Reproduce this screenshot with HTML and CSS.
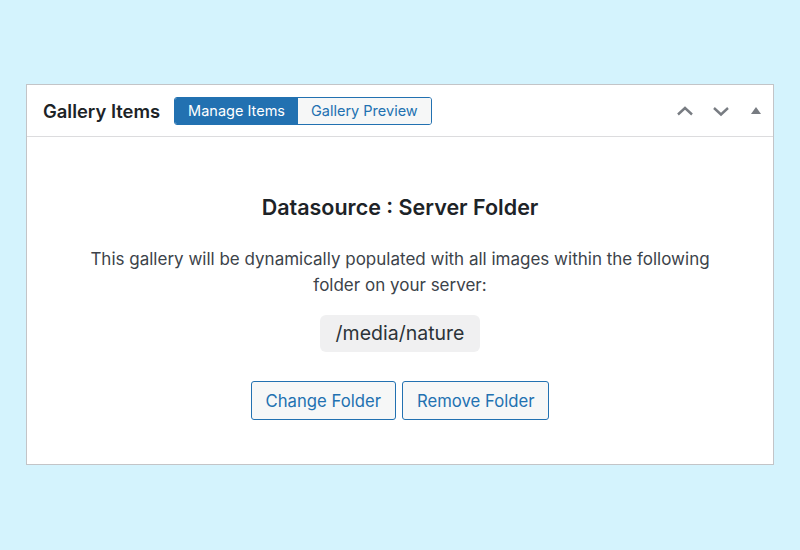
FILE: index.html
```html
<!DOCTYPE html>
<html lang="en">
<head>
  <meta charset="UTF-8">
  <title>Gallery Items</title>
  <link rel="stylesheet" href="styles.css">
</head>
<body>
  <div class="postbox">
    <div class="postbox-header">
      <h2 class="postbox-title">Gallery Items</h2>
      <div class="tab-group">
        <button class="tab active">Manage Items</button>
        <button class="tab">Gallery Preview</button>
      </div>
      <div class="handle-actions">
        <button class="handle-btn" aria-label="Move up">
          <svg width="20" height="20" viewBox="0 0 20 20"><path d="M3 13.5 L10 7 L17 13.5" fill="none" stroke="#787c82" stroke-width="2.4"/></svg>
        </button>
        <button class="handle-btn" aria-label="Move down">
          <svg width="20" height="20" viewBox="0 0 20 20"><path d="M3 7 L10 13.5 L17 7" fill="none" stroke="#787c82" stroke-width="2.4"/></svg>
        </button>
        <button class="handle-btn toggle" aria-label="Toggle panel">
          <svg width="12" height="10" viewBox="0 0 12 10"><path d="M6 1 L11 8 L1 8 Z" fill="#787c82"/></svg>
        </button>
      </div>
    </div>

    <div class="postbox-inside">
      <h3 class="datasource-title">Datasource : Server Folder</h3>
      <p class="datasource-desc">This gallery will be dynamically populated with all images within the following folder on your server:</p>
      <div class="folder-path">/media/nature</div>
      <div class="button-row">
        <button class="button">Change Folder</button>
        <button class="button">Remove Folder</button>
      </div>
    </div>
  </div>
</body>
</html>
```

FILE: styles.css
```css
body {
  margin: 0;
  padding: 84px 26px 0;
  background-color: #d4f3fd;
  font-family: Inter, 'Noto Sans', sans-serif;
  color: #1d2327;
}
.postbox {
  background-color: #fff;
  border: 1px solid #c3c4c7;
  height: 381px;
  box-sizing: border-box;
}
.postbox-header {
  display: flex;
  align-items: center;
  height: 52px;
  padding: 0 0 0 16px;
  border-bottom: 1px solid #dcdcde;
  box-sizing: border-box;
}
.postbox-title {
  font-size: 18.4px;
  font-weight: 600;
  margin: 0 14px 0 0;
  color: #1d2327;
}
.tab-group {
  display: flex;
  border: 1px solid #2271b1;
  border-radius: 3px;
  overflow: hidden;
}
.tab {
  font-family: inherit;
  font-size: 14.5px;
  height: 26px;
  padding: 0 13px;
  border: none;
  background-color: #f6f7f7;
  color: #2271b1;
  cursor: pointer;
}
.tab.active {
  background-color: #2271b1;
  color: #fff;
}
.handle-actions {
  margin-left: auto;
  display: flex;
  align-items: center;
}
.handle-btn {
  width: 36px;
  height: 36px;
  padding: 0;
  border: none;
  background: none;
  display: flex;
  align-items: center;
  justify-content: center;
  cursor: pointer;
}
.handle-btn.toggle {
  width: 34px;
}
.postbox-inside {
  text-align: center;
  padding: 57px 40px 0;
}
.datasource-title {
  font-size: 21.5px;
  font-weight: 600;
  margin: 0 0 26px;
  color: #1d2327;
}
.datasource-desc {
  font-size: 17px;
  line-height: 26px;
  color: #3c434a;
  max-width: 640px;
  margin: 0 auto 17px;
}
.folder-path {
  display: inline-block;
  background-color: #f0f0f1;
  border-radius: 6px;
  font-size: 19.5px;
  line-height: 21px;
  padding: 8px 16px;
  color: #2c3338;
}
.button-row {
  display: flex;
  justify-content: center;
  gap: 6px;
  margin-top: 29px;
}
.button {
  font-family: inherit;
  font-size: 16.7px;
  height: 39px;
  padding: 0 14px;
  border: 1px solid #2271b1;
  border-radius: 3px;
  background-color: #f6f7f7;
  color: #2271b1;
  cursor: pointer;
}
```
